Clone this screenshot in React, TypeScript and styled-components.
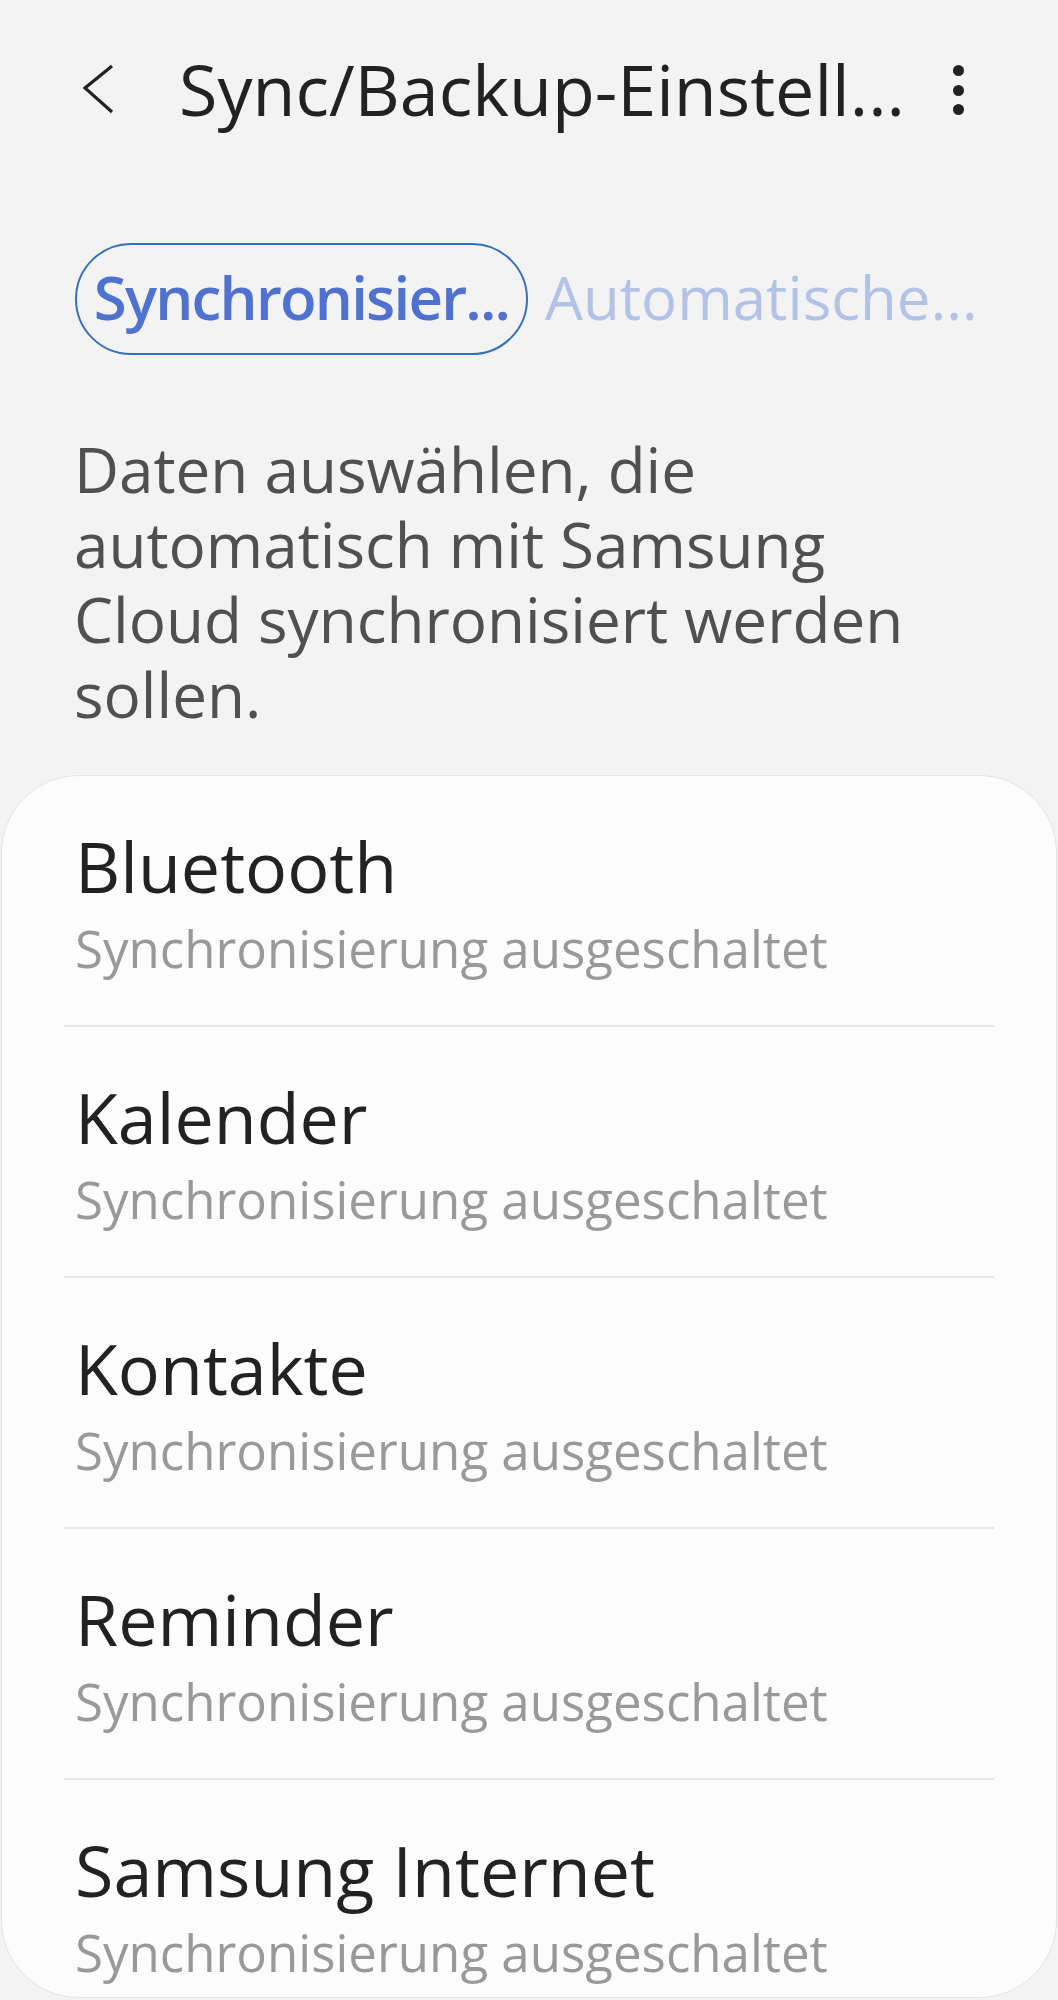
import React from 'react';
import styled, { createGlobalStyle } from 'styled-components';

const GlobalStyle = createGlobalStyle`
    html, body {
        margin: 0;
        padding: 0;
        background: #f3f3f3;
    }
    body {
        font-family: "Open Sans", "Noto Sans", sans-serif;
    }
`

const Screen = styled.div`
    height: 2000px;
    display: flex;
    flex-direction: column;
    background: #f3f3f3;
    overflow: hidden;
`

const Header = styled.header`
    height: 178px;
    flex-shrink: 0;
    display: flex;
    align-items: center;
    padding: 0 94px 0 83px;
    box-sizing: border-box;
`

const BackButton = styled.div`
    width: 32px;
    height: 52px;
    display: flex;
    align-items: center;
    margin-right: 64px;
`

const Title = styled.h1`
    flex: 1;
    margin: 0;
    font-size: 70px;
    font-weight: 400;
    line-height: 96px;
    color: #222222;
    white-space: nowrap;
`

const Kebab = styled.div`
    display: flex;
    flex-direction: column;
    gap: 8.5px;
    padding-top: 2px;
`

const Dot = styled.span`
    width: 11px;
    height: 11px;
    border-radius: 50%;
    background: #222222;
`

const Tabs = styled.div`
    display: flex;
    align-items: center;
    gap: 17px;
    padding-left: 75px;
    margin-top: 65px;
    flex-shrink: 0;
`

const Tab = styled.div<{ $active?: boolean }>`
    height: 112px;
    box-sizing: border-box;
    display: flex;
    align-items: center;
    justify-content: center;
    white-space: nowrap;
    font-size: 60px;
    font-weight: ${p => (p.$active ? 600 : 400)};
    letter-spacing: ${p => (p.$active ? '-1.8px' : '0')};
    color: ${p => (p.$active ? '#4f72d0' : '#b3c3e8')};
    border: ${p => (p.$active ? '2px solid #3471ba' : 'none')};
    border-radius: 56px;
    width: ${p => (p.$active ? '453px' : 'auto')};
    padding-bottom: 4px;
`

const Description = styled.p`
    margin: 77px 0 0;
    padding: 0 80px 0 74px;
    font-size: 62px;
    line-height: 75px;
    color: #505050;
    flex-shrink: 0;
`

const Card = styled.section`
    flex: 1;
    margin: 43px 1px 2px;
    background: #fcfcfc;
    border: 1px solid #e4e4e4;
    border-radius: 78px;
    overflow: hidden;
`

const Row = styled.div`
    padding: 48px 0 46px 73px;
`

const RowTitle = styled.div`
    font-size: 70px;
    line-height: 84px;
    color: #222222;
`

const RowSubtitle = styled.div`
    margin-top: 9px;
    font-size: 51px;
    line-height: 62px;
    color: #999999;
`

const Divider = styled.div`
    height: 2px;
    margin: 0 62px;
    background: #e6e6e6;
`

const items = ['Bluetooth', 'Kalender', 'Kontakte', 'Reminder', 'Samsung Internet']

export default function App() {
    return (
        <Screen>
            <GlobalStyle />
            <Header>
                <BackButton>
                    <svg width="32" height="52" viewBox="0 0 32 52">
                        <polyline points="29,3 2,25 29,49" fill="none" stroke="#222" strokeWidth="3.2" />
                    </svg>
                </BackButton>
                <Title>Sync/Backup-Einstell...</Title>
                <Kebab>
                    <Dot />
                    <Dot />
                    <Dot />
                </Kebab>
            </Header>
            <Tabs>
                <Tab $active>Synchronisier...</Tab>
                <Tab>Automatische...</Tab>
            </Tabs>
            <Description>
                Daten auswählen, die automatisch mit Samsung Cloud synchronisiert werden sollen.
            </Description>
            <Card>
                {items.map((name, i) => (
                    <React.Fragment key={name}>
                        <Row>
                            <RowTitle>{name}</RowTitle>
                            <RowSubtitle>Synchronisierung ausgeschaltet</RowSubtitle>
                        </Row>
                        {i < items.length - 1 && <Divider />}
                    </React.Fragment>
                ))}
            </Card>
        </Screen>
    )
}
